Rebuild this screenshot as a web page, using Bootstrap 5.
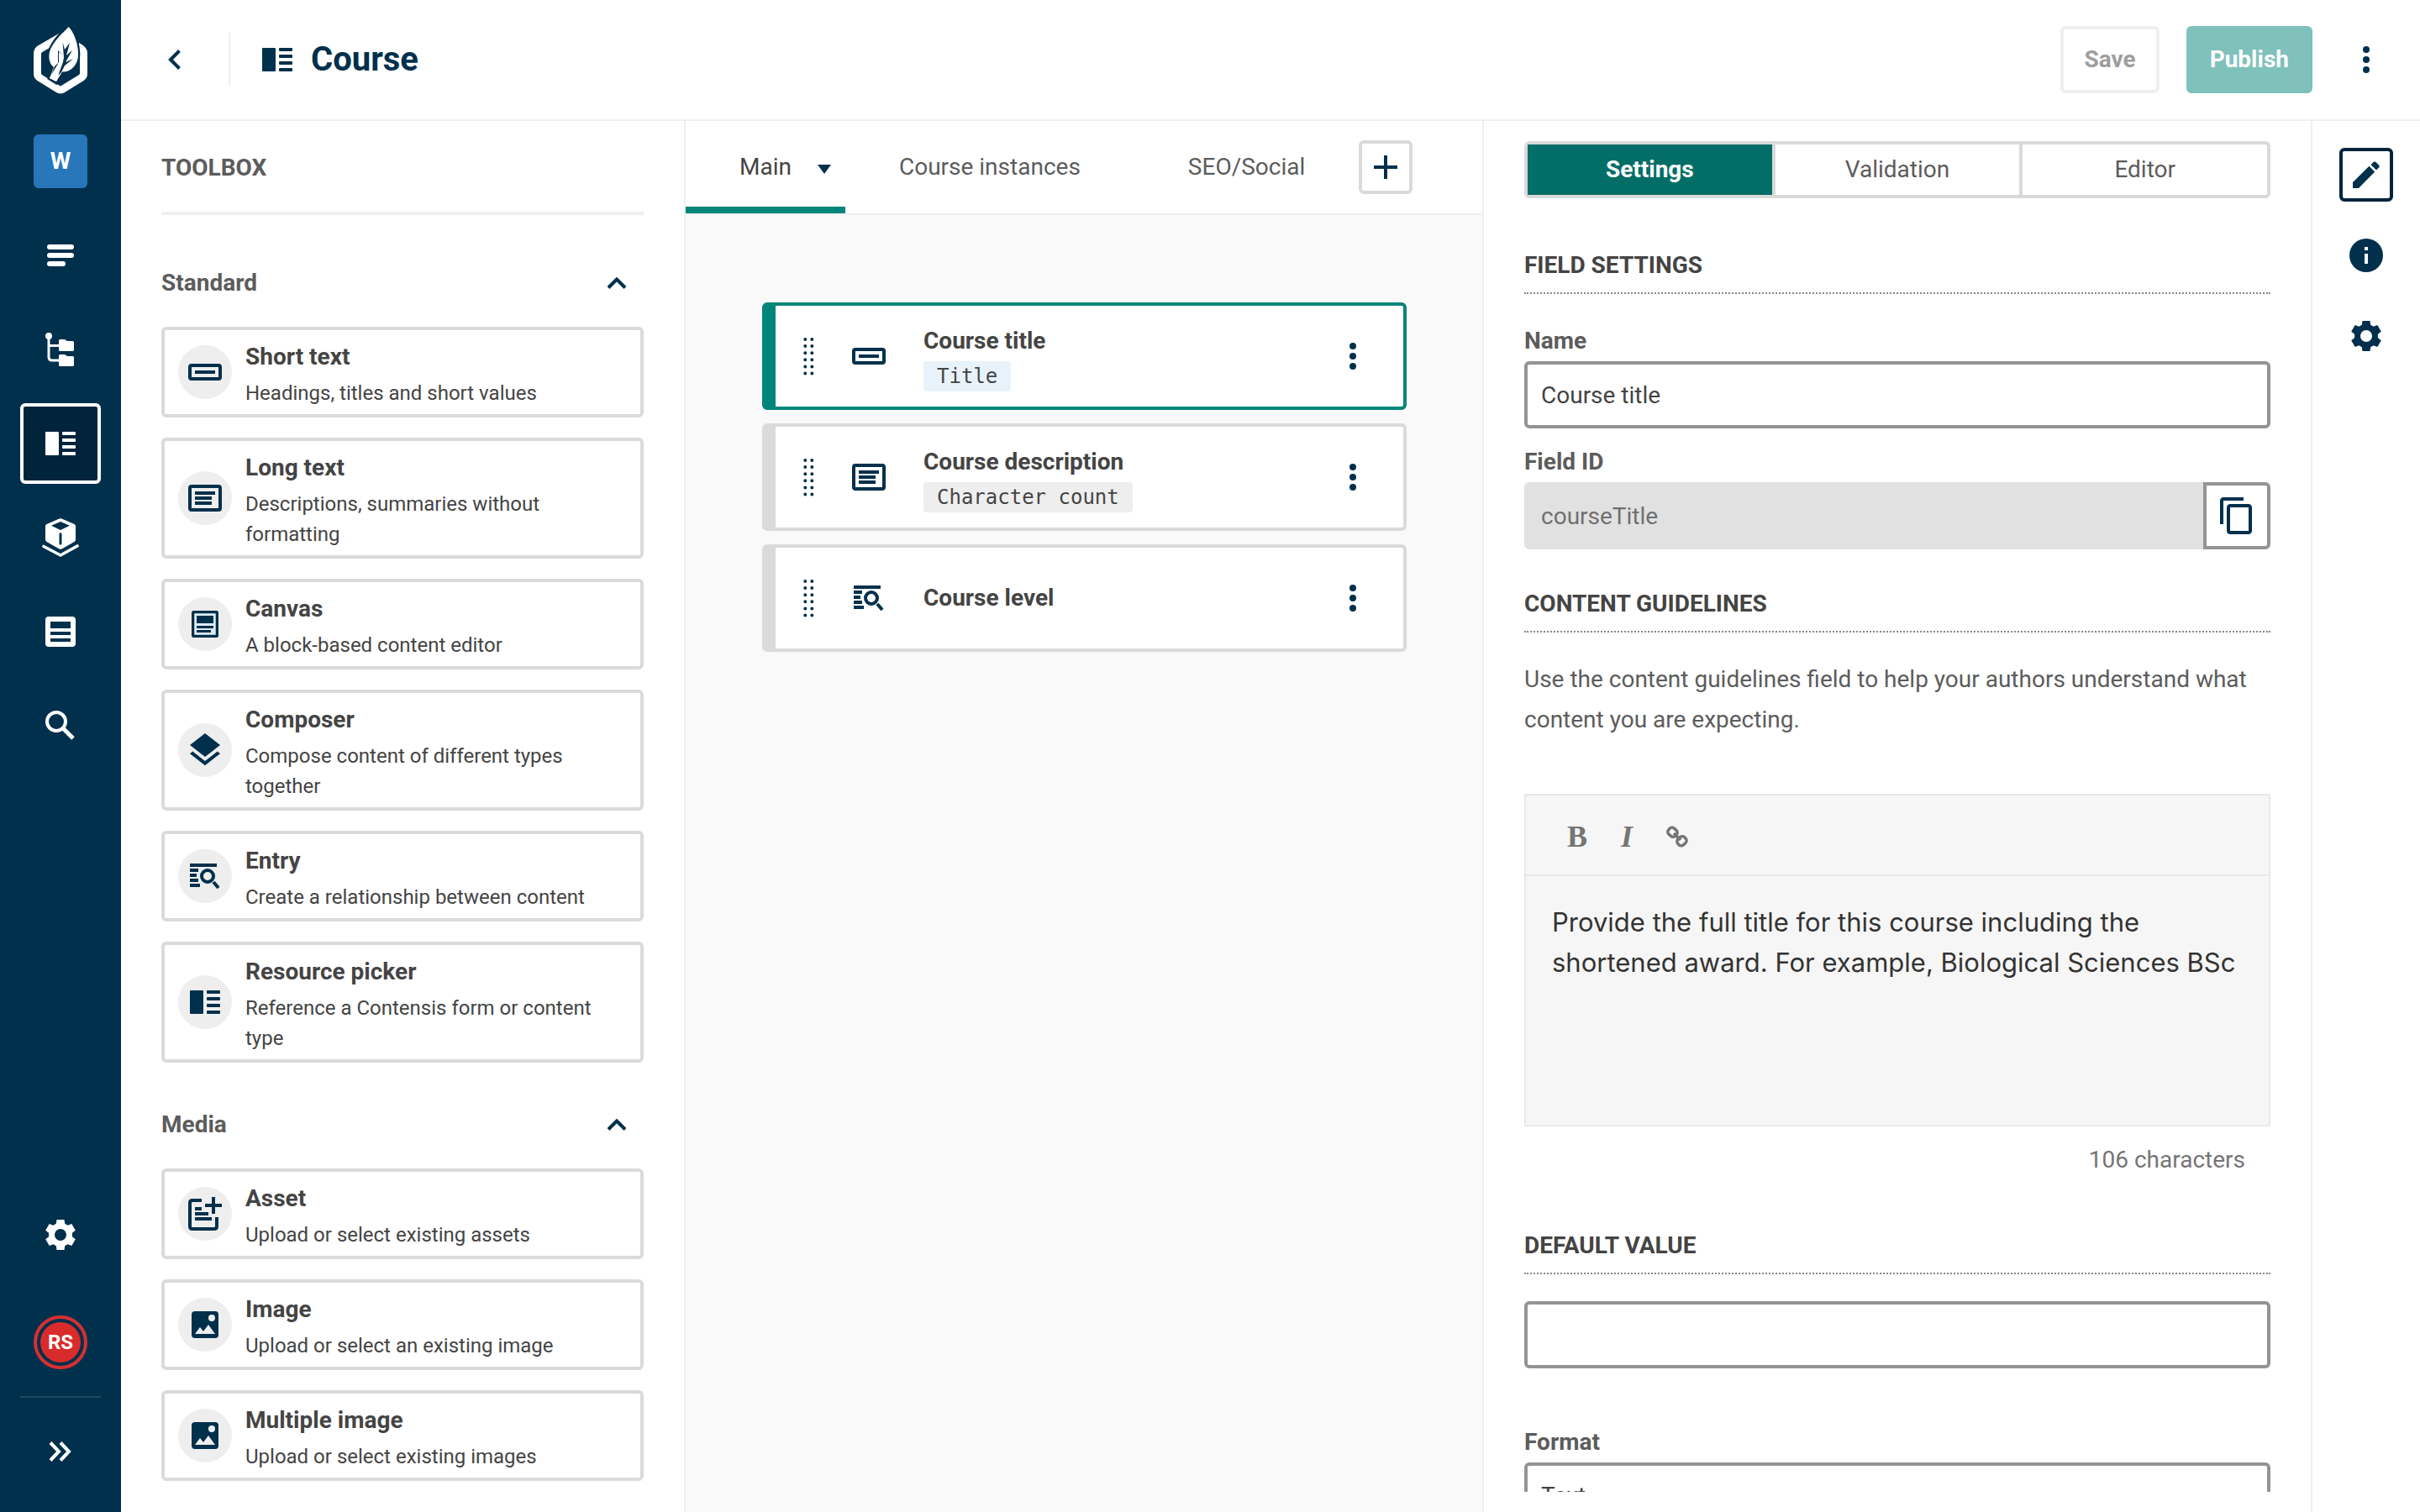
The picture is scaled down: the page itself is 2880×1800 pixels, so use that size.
<!DOCTYPE html>
<html lang="en">
<head>
<meta charset="utf-8">
<meta name="viewport" content="width=device-width, initial-scale=1">
<title>Course</title>
<link href="https://cdn.jsdelivr.net/npm/bootstrap@5.3.0/dist/css/bootstrap.min.css" rel="stylesheet">
<style>
:root{--navy:#00304c;--teal:#00857a;--line:#efefef;--edge:#dadada;--ink:#444;--ink2:#5c5c5c}
body{font-family:Roboto,"Liberation Sans",sans-serif;font-size:28px;line-height:40px;color:var(--ink);background:#fff}
svg{display:block;flex:none;fill:currentColor}
.ln{fill:none;stroke:currentColor}
h1,h2,h3,p{margin:0}
button.btn,a.btn{--bs-btn-padding-x:0;--bs-btn-padding-y:0;--bs-btn-font-size:28px;--bs-btn-line-height:40px;--bs-btn-border-width:4px;--bs-btn-border-radius:6px;display:flex;align-items:center;justify-content:center;color:var(--navy)}
.btn.sq{width:64px;height:64px}
.btn.edged{border-color:var(--edge)}
.grow{min-width:0;min-height:0}

.rail{width:144px;background:var(--navy);padding:32px 24px 24px;flex:none}
.rail a{display:flex;align-items:center;justify-content:center;color:#fff;height:96px;border:4px solid transparent;border-radius:6px;text-decoration:none}
.rail a.active{background:#00243b;border-color:#fff}
.rail a.logo{height:80px;border:0}
.rail a.project{width:64px;height:64px;background:#2877bb;margin:48px auto 32px;font-weight:700;border:0}
.rail a.user{width:64px;height:64px;border:4px solid #d63031;border-radius:50%;margin:32px auto 0;padding:4px}
.user span{display:block;width:48px;height:48px;border-radius:50%;background:#d92b2b;font-weight:700;font-size:24px;line-height:48px;text-align:center}
.rail hr{margin:32px 0 16px;border-top:2px solid #1d4863;opacity:1}

.topbar{height:144px;flex:none;border-bottom:2px solid var(--line);padding:0 32px}
.topbar h1{font-size:40px;line-height:48px;font-weight:700;color:var(--navy)}
.bar-sep{width:2px;height:64px;background:var(--line);margin:0 38px 0 32px}
.page-title{color:var(--navy);gap:22px}
.actions{gap:32px}
.btn.save{height:80px;padding:0 24px;border-color:var(--line);color:#9e9e9e;font-weight:700}
.btn.publish{height:80px;padding:0 24px;background:#7fc1bb;border-color:#7fc1bb;color:#fff;font-weight:700}
.btn:disabled{opacity:1}

.toolbox{width:672px;flex:none;border-right:2px solid var(--line);padding:36px 48px 0;overflow:hidden}
.toolbox h2{font-size:28px;line-height:40px;font-weight:700;color:var(--ink2);padding-bottom:32px;border-bottom:4px solid var(--line)}
.std{margin-top:61px}
.media{margin-top:54px}
.group-head{background:none;border:0;width:100%;padding:0 20px 0 0;margin-bottom:32px;font-weight:700;color:var(--ink2)}
.group-head svg{color:var(--navy)}
.tool{border:4px solid var(--edge);border-radius:6px;padding:7px 16px;gap:16px;flex-direction:row;align-items:center;color:var(--ink)}
.tool h3{font-size:28px;line-height:40px;font-weight:700;margin:5px 0}
.tool p{font-size:24px;line-height:36px}
.disc{width:64px;height:64px;border-radius:50%;background:#eee;color:var(--navy);flex:none}

.canvas{background:#f9f9f9;min-width:0}
.tabs{height:112px;background:#fff;border-bottom:2px solid var(--line)}
.tabs .nav-link{display:flex;align-items:center;height:110px;padding:0 64px;color:var(--ink2);border-bottom:8px solid transparent;border-top:7px solid transparent;border-radius:0}
.tabs .nav-link.active{color:var(--ink);border-bottom-color:var(--teal);padding:0 17px 0 64px;gap:31px}
.tabs .nav-link svg{color:var(--navy);margin-top:5px}
.fields{padding:104px 90px 104px 91px;gap:16px}
.field{height:128px;border:4px solid var(--edge);border-left-width:16px;border-radius:6px;flex-direction:row;align-items:center;color:var(--navy);padding:0 44px 0 33px}
.field.active{border-color:var(--teal)}
.field h3{font-size:28px;line-height:40px;font-weight:700;color:var(--ink)}
.field-icon{width:40px;margin:0 45px}
.tag{display:block;width:fit-content;background:#eee;border-radius:4px;padding:0 16px;margin-top:4px;font:24px/36px "DejaVu Sans Mono",monospace;color:var(--ink)}
.tag.info{background:#e8f2fa}

.settings-col{width:986px;flex:none;border-left:2px solid var(--line);padding-bottom:24px}
.settings{padding:24px 48px 0}
.seg{height:68px;display:flex;border:4px solid var(--edge);border-radius:6px}
.btn.seg-btn{flex:1 1 0;border:0;border-radius:0;color:var(--ink2);height:60px}
.btn.seg-btn + .seg-btn{border-left:4px solid var(--edge)}
.btn.seg-btn.active{background:#036e67;color:#fff;font-weight:700}
.settings h2{font-size:28px;line-height:40px;font-weight:700;padding-bottom:12px;border-bottom:2px dotted #888}
.settings label{display:block;font-weight:700;color:var(--ink2);margin:0 0 4px}
.settings .h-first{margin-top:60px}
.g-name{margin-top:36px}
.g-id{margin-top:20px}
.settings .h-guide{margin-top:45px}
.box{height:80px;border:4px solid #949494;border-radius:6px;padding:0 16px;font-size:28px;line-height:40px;color:var(--ink)}
.box:disabled{background:#e1e1e1;border-color:#e1e1e1;color:#707070}
.btn.copy{width:80px;height:80px;border:4px solid #949494;border-radius:0 6px 6px 0}
.hint{margin-top:32px;line-height:48px;color:var(--ink2)}
.editor{margin-top:64px;border:2px solid #e8e8e8;background:#f6f6f6;height:396px}
.editor-bar{height:96px;border-bottom:2px solid #e8e8e8;padding:4px 49px 0;gap:40px}
.editor-bar button{background:none;border:0;padding:0;color:#757575;font-family:"Liberation Serif",serif;font-size:36px;line-height:48px}
.editor textarea{background:none;border:0;padding:31px 20px 0 31px;height:280px;resize:none;width:100%;font:31px/48px Inter,sans-serif;color:#333;display:block}
.count{margin-top:20px;color:#757575;padding-right:30px}
.settings .h-default{margin-top:62px}
.default{margin-top:32px}
.g-format{margin-top:68px}

.dock{width:130px;flex:none;border-left:2px solid var(--line);padding:32px 32px 0;gap:32px;color:var(--navy)}
.btn.edit{border-color:#00243b}
</style>
<script src="https://cdn.jsdelivr.net/npm/bootstrap@5.3.0/dist/js/bootstrap.bundle.min.js"></script>
</head>
<body class="vh-100 overflow-hidden d-flex">
<svg width="0" height="0" class="position-absolute" aria-hidden="true">
<symbol id="i-type" viewBox="0 0 36 28"><rect width="16" height="28" rx="1"/><rect x="20" width="16" height="4" rx="1"/><rect x="20" y="8" width="16" height="4" rx="1"/><rect x="20" y="16" width="16" height="4" rx="1"/><rect x="20" y="24" width="16" height="4" rx="1"/></symbol>
<symbol id="i-gear" viewBox="-18 -18 36 36"><path fill-rule="evenodd" d="M-4.500-18H4.500L5.200-13.200 8.600-11.200 13.300-13.100 17.800-5.300 13.900-2.200V2.200L17.800 5.300 13.300 13.100 8.600 11.200 5.200 13.200 4.500 18H-4.500L-5.200 13.200-8.600 11.200-13.300 13.100-17.800 5.300-13.900 2.200V-2.200L-17.800-5.300-13.300-13.100-8.600-11.200-5.200-13.200ZM0-7A7 7 0 1 0 0 7 7 7 0 1 0 0-7Z"/></symbol>
<symbol id="i-dots" viewBox="0 0 8 32"><circle cx="4" cy="4" r="4"/><circle cx="4" cy="16" r="4"/><circle cx="4" cy="28" r="4"/></symbol>
<symbol id="i-short" viewBox="0 0 40 20"><rect class="ln" x="2" y="2" width="36" height="16" rx="2" stroke-width="4"/><rect x="8" y="8" width="24" height="4"/></symbol>
<symbol id="i-long" viewBox="0 0 40 32"><rect class="ln" x="2" y="2" width="36" height="28" rx="2" stroke-width="4"/><path d="M8 8h24v4H8zM8 14h20v4H8zM8 20h20v4H8z"/></symbol>
<symbol id="i-canvas" viewBox="0 0 32 32"><rect x="1.500" y="1.500" width="29" height="29" rx="2" fill="#dfeaf3" stroke="currentColor" stroke-width="3.500"/><path d="M6 6h20v9H6zM6 18h20v3H6zM6 23h17v3H6z"/></symbol>
<symbol id="i-layers" viewBox="0 0 24 24"><path d="M11.990 18.540l-7.370-5.730L3 14.070l9 7 9-7-1.630-1.270-7.380 5.740zM12 16l7.360-5.730L21 9l-9-7-9 7 1.630 1.270L12 16z"/></symbol>
<symbol id="i-entry" viewBox="0 0 36 30"><path d="M0 0h32v4H0zM0 6h10v4H0zM0 12h8v4H0zM0 18h10v4H0zM0 24h12v4H0z"/><circle class="ln" cx="21" cy="15" r="7" stroke-width="4"/><path class="ln" stroke-width="4" d="M28 22l6 7"/></symbol>
<symbol id="i-asset" viewBox="0 0 40 40"><path class="ln" stroke-width="4" d="M16 4H5Q2 4 2 7V35Q2 38 5 38H31Q34 38 34 35V24"/><path d="M8 12h8v4H8zM8 18h16v4H8zM8 24h20v4H8zM28 0h4v8h8v4h-8v8h-4v-8h-8V8h8z"/></symbol>
<symbol id="i-image" viewBox="0 0 32 32"><rect width="32" height="32" rx="4"/><circle cx="24" cy="8" r="4" fill="#eee"/><path fill="#eee" d="M4 27l6-8 4 5 6-8 8 11z"/></symbol>
<symbol id="i-up" viewBox="0 0 24 14"><path class="ln" stroke-width="4" d="M2 12.500L12 2.500 22 12.500"/></symbol>
<symbol id="i-grip" viewBox="0 0 13 45"><path class="ln" stroke-width="4" stroke-linecap="round" stroke-dasharray="0 8.100" d="M2.300 2V45M10.300 2V45"/></symbol>
</svg>

<nav class="rail d-flex flex-column" aria-label="Main navigation">
  <a href="#" class="logo" aria-label="Home"><svg width="64" height="80" viewBox="0 0 64 80"><path class="ln" stroke-width="9" d="M34 11L8 26Q4.500 28 4.500 32V56Q4.500 59 8 61L29 74Q32 76 35 74L56 61Q59.500 59 59.500 56V31Q59.500 27 52 23"/><path stroke="#00304c" stroke-width="4.500" d="M41.700-1C34 7 20 20 18.500 33 18 40 20 46 24 48.500L19 61 27 66 34 54C44 54 52 46 53 35 54 22 48 6 41.700-1Z"/><path d="M41.700 0C34 8 20 20 18.500 33 18 40 20 45 24 48L19 61 27 65 34 53.500C44 54 52 46 53 35 54 22 48 6 41.700 0Z"/><path fill="#00304c" d="M36 36L34.500 18 37 27 43 19 39 34 46 28 38 42 47 38 37 46 33 54 29 58 35 42ZM35 34L29 28V44L21 57 25 47 30 42 30 30Z"/><path d="M36 35L19 61 27 65Z"/></svg></a>
  <a href="#" class="project">W</a>
  <div class="d-flex flex-column gap-3">
    <a href="#" aria-label="Entries"><svg width="32" height="26" viewBox="0 0 32 26"><rect width="32" height="6" rx="3"/><rect y="10" width="32" height="6" rx="3"/><rect y="20" width="22" height="6" rx="3"/></svg></a>
    <a href="#" aria-label="Site view"><svg width="36" height="40" viewBox="0 0 36 40"><circle cx="4" cy="4" r="4"/><path class="ln" stroke-width="3" d="M4 4V29Q4 33 8 33H17M4 15.500H17"/><path d="M16 9.500Q16 8 17.500 8H23L26 10H32.500Q34 10 34 11.500V20.500Q34 22 32.500 22H17.500Q16 22 16 20.500ZM16 27.500Q16 26 17.500 26H23L26 28H32.500Q34 28 34 29.500V38.500Q34 40 32.500 40H17.500Q16 40 16 38.500Z"/></svg></a>
    <a href="#" class="active" aria-label="Content types"><svg width="36" height="28"><use href="#i-type"/></svg></a>
    <a href="#" aria-label="Components"><svg width="44" height="46" viewBox="0 0 44 46"><path fill-rule="evenodd" d="M20.500.6Q22 0 23.500.6L38.500 7Q40 7.800 40 9.500V25Q40 27 38.500 28L23.500 36.500Q22 37 20.500 36.500L5.500 28Q4 27 4 25V9.500Q4 7.800 5.500 7ZM22 4L11 8.800 22 14 33 8.800ZM20.500 18.500V30.500Q22 33 23.500 30.500V18.500Q22 16 20.500 18.500Z"/><path class="ln" stroke-width="3.600" stroke-linecap="round" stroke-linejoin="round" d="M2 33.500L22 44 42 33"/></svg></a>
    <a href="#" aria-label="Forms"><svg width="36" height="36" viewBox="0 0 36 36"><path fill-rule="evenodd" d="M4 0H32Q36 0 36 4V32Q36 36 32 36H4Q0 36 0 32V4Q0 0 4 0ZM6 6V14H30V6ZM6 18V22H30V18ZM6 26V30H30V26Z"/></svg></a>
    <a href="#" aria-label="Search"><svg width="36" height="36" viewBox="0 0 36 36"><circle class="ln" cx="13" cy="13" r="11" stroke-width="4"/><path class="ln" stroke-width="5" d="M21.500 21.500L33 33"/></svg></a>
  </div>
  <div class="mt-auto">
    <a href="#" aria-label="Settings"><svg width="36" height="36"><use href="#i-gear"/></svg></a>
    <a href="#" class="user mt-5"><span>RS</span></a>
    <hr>
    <a href="#" aria-label="Expand"><svg width="28" height="24" viewBox="0 0 28 24"><path class="ln" stroke-width="4" d="M2 1.500L12 12 2 22.500M14 1.500L24 12 14 22.500"/></svg></a>
  </div>
</nav>

<div class="grow flex-grow-1 d-flex flex-column">
  <header class="topbar d-flex align-items-center">
    <button class="btn sq" aria-label="Back"><svg width="16" height="24" viewBox="0 0 16 24"><path class="ln" stroke-width="4" d="M13.500 1.500L3 12 13.500 22.500"/></svg></button>
    <div class="bar-sep"></div>
    <div class="page-title d-flex align-items-center"><svg width="36" height="28"><use href="#i-type"/></svg><h1>Course</h1></div>
    <div class="actions ms-auto d-flex align-items-center">
      <button class="btn save" disabled>Save</button>
      <button class="btn publish" disabled>Publish</button>
      <button class="btn sq" aria-label="More"><svg width="8" height="32"><use href="#i-dots"/></svg></button>
    </div>
  </header>

  <div class="grow flex-grow-1 d-flex">
    <aside class="toolbox">
      <h2>TOOLBOX</h2>
      <section class="std">
        <button class="group-head d-flex align-items-center justify-content-between">Standard<svg width="24" height="14"><use href="#i-up"/></svg></button>
        <div class="d-flex flex-column gap-4">
          <div class="card tool"><span class="disc d-flex align-items-center justify-content-center"><svg width="40" height="20"><use href="#i-short"/></svg></span><div><h3>Short text</h3><p>Headings, titles and short values</p></div></div>
          <div class="card tool"><span class="disc d-flex align-items-center justify-content-center"><svg width="40" height="32"><use href="#i-long"/></svg></span><div><h3>Long text</h3><p>Descriptions, summaries without formatting</p></div></div>
          <div class="card tool"><span class="disc d-flex align-items-center justify-content-center"><svg width="32" height="32"><use href="#i-canvas"/></svg></span><div><h3>Canvas</h3><p>A block-based content editor</p></div></div>
          <div class="card tool"><span class="disc d-flex align-items-center justify-content-center"><svg width="48" height="48"><use href="#i-layers"/></svg></span><div><h3>Composer</h3><p>Compose content of different types together</p></div></div>
          <div class="card tool"><span class="disc d-flex align-items-center justify-content-center"><svg width="36" height="30"><use href="#i-entry"/></svg></span><div><h3>Entry</h3><p>Create a relationship between content</p></div></div>
          <div class="card tool"><span class="disc d-flex align-items-center justify-content-center"><svg width="36" height="28"><use href="#i-type"/></svg></span><div><h3>Resource picker</h3><p>Reference a Contensis form or content type</p></div></div>
        </div>
      </section>
      <section class="media">
        <button class="group-head d-flex align-items-center justify-content-between">Media<svg width="24" height="14"><use href="#i-up"/></svg></button>
        <div class="d-flex flex-column gap-4">
          <div class="card tool"><span class="disc d-flex align-items-center justify-content-center"><svg width="40" height="40"><use href="#i-asset"/></svg></span><div><h3>Asset</h3><p>Upload or select existing assets</p></div></div>
          <div class="card tool"><span class="disc d-flex align-items-center justify-content-center"><svg width="32" height="32"><use href="#i-image"/></svg></span><div><h3>Image</h3><p>Upload or select an existing image</p></div></div>
          <div class="card tool"><span class="disc d-flex align-items-center justify-content-center"><svg width="32" height="32"><use href="#i-image"/></svg></span><div><h3>Multiple image</h3><p>Upload or select existing images</p></div></div>
        </div>
      </section>
    </aside>

    <main class="canvas flex-grow-1">
      <div class="tabs nav d-flex flex-nowrap align-items-center">
        <a href="#" class="nav-link active">Main<svg width="16" height="11" viewBox="0 0 16 11"><path d="M0 0H16L8 11Z"/></svg></a>
        <a href="#" class="nav-link">Course instances</a>
        <a href="#" class="nav-link">SEO/Social</a>
        <button class="btn sq edged" aria-label="Add tab"><svg width="28" height="28" viewBox="0 0 28 28"><path class="ln" stroke-width="4" d="M14 0V28M0 14H28"/></svg></button>
      </div>
      <div class="fields d-flex flex-column">
        <div class="card field active"><svg width="13" height="45"><use href="#i-grip"/></svg><span class="field-icon d-flex justify-content-center"><svg width="40" height="20"><use href="#i-short"/></svg></span><div class="me-auto pt-1"><h3>Course title</h3><span class="tag info">Title</span></div><button class="btn p-2" aria-label="Options"><svg width="8" height="32"><use href="#i-dots"/></svg></button></div>
        <div class="card field"><svg width="13" height="45"><use href="#i-grip"/></svg><span class="field-icon d-flex justify-content-center"><svg width="40" height="32"><use href="#i-long"/></svg></span><div class="me-auto pt-1"><h3>Course description</h3><span class="tag">Character count</span></div><button class="btn p-2" aria-label="Options"><svg width="8" height="32"><use href="#i-dots"/></svg></button></div>
        <div class="card field"><svg width="13" height="45"><use href="#i-grip"/></svg><span class="field-icon d-flex justify-content-center"><svg width="36" height="30"><use href="#i-entry"/></svg></span><div class="me-auto"><h3>Course level</h3></div><button class="btn p-2" aria-label="Options"><svg width="8" height="32"><use href="#i-dots"/></svg></button></div>
      </div>
    </main>

    <div class="settings-col d-flex flex-column">
    <section class="settings overflow-hidden">
      <div class="seg"><button class="btn seg-btn active">Settings</button><button class="btn seg-btn">Validation</button><button class="btn seg-btn">Editor</button></div>
      <h2 class="h-first">FIELD SETTINGS</h2>
      <div class="g-name"><label for="name">Name</label><input id="name" class="form-control box" value="Course title"></div>
      <div class="g-id"><label for="fid">Field ID</label><div class="input-group flex-nowrap"><input id="fid" class="form-control box" value="courseTitle" disabled><button class="btn copy" aria-label="Copy"><svg width="48" height="48" viewBox="0 0 24 24"><path d="M16 1H4c-1.100 0-2 .9-2 2v14h2V3h12V1zm3 4H8c-1.100 0-2 .9-2 2v14c0 1.100.9 2 2 2h11c1.100 0 2-.9 2-2V7c0-1.100-.9-2-2-2zm0 16H8V7h11v14z"/></svg></button></div></div>
      <h2 class="h-guide">CONTENT GUIDELINES</h2>
      <p class="hint">Use the content guidelines field to help your authors understand what content you are expecting.</p>
      <div class="editor">
        <div class="editor-bar d-flex align-items-center"><button aria-label="Bold"><b>B</b></button><button aria-label="Italic"><b><i>I</i></b></button><button aria-label="Link"><svg width="26" height="26" viewBox="0 0 26 26"><g class="ln" stroke-width="3.500"><rect x="2" y="3" width="11" height="9.500" rx="4" transform="rotate(40 7.500 7.700)"/><rect x="13" y="13.500" width="11" height="9.500" rx="4" transform="rotate(-40 18.500 18.300)"/><path d="M9 9L17 17"/></g></svg></button></div>
        <textarea aria-label="Guidelines">Provide the full title for this course including the shortened award. For example, Biological Sciences BSc</textarea>
      </div>
      <p class="count text-end">106 characters</p>
      <h2 class="h-default">DEFAULT VALUE</h2>
      <input class="form-control box default" aria-label="Default value">
      <div class="g-format"><label for="fmt">Format</label><select id="fmt" class="form-control box"><option>Text</option></select></div>
    </section>
    </div>

    <aside class="dock d-flex flex-column align-items-center">
      <button class="btn sq edit" aria-label="Edit"><svg width="32" height="32" viewBox="0 0 32 32"><path d="M0 32V25L19.500 5.800 26.200 12.500 7 32ZM21.500 4L24.800.8Q26 0 27.200.8L31.200 4.800Q32.200 6 31.200 7.200L28 10.500Z"/></svg></button>
      <button class="btn sq" aria-label="Information"><svg width="40" height="40" viewBox="0 0 40 40"><path fill-rule="evenodd" d="M20 0A20 20 0 1 1 20 40 20 20 0 1 1 20 0ZM18 10V14H22V10ZM18 18V30H22V18Z"/></svg></button>
      <button class="btn sq" aria-label="Settings"><svg width="36" height="36"><use href="#i-gear"/></svg></button>
    </aside>
  </div>
</div>
</body>
</html>
